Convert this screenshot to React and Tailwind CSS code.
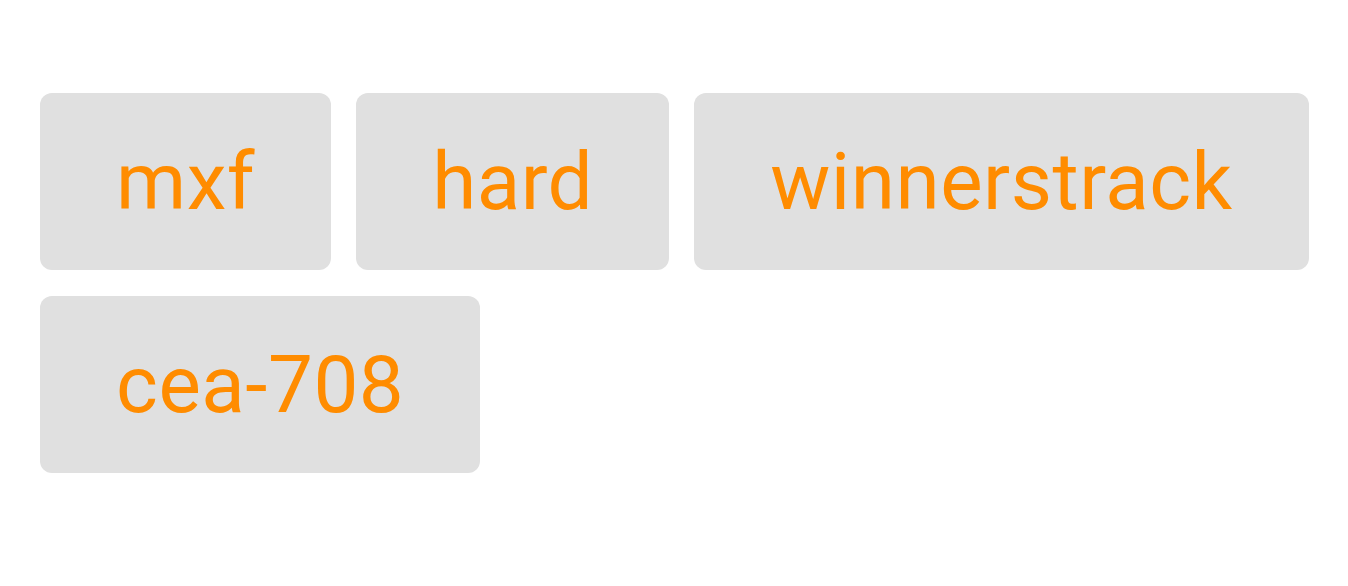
const tags = ["mxf", "hard", "winnerstrack", "cea-708"];

function App() {
  return (
    <div className="min-h-screen bg-white pl-[40px] pr-[30px] pt-[93px]" style={{ fontFamily: "Roboto, sans-serif" }}>
      <div className="flex flex-wrap gap-x-[25px] gap-y-[26px]">
        {tags.map((tag) => (
          <div
            key={tag}
            className="rounded-[12px] bg-[#e0e0e0] px-[76px] pt-[43px] pb-[41px] text-[80px] leading-[93px] tracking-[0.5px] text-[#ff8c00]"
          >
            {tag}
          </div>
        ))}
      </div>
    </div>
  );
}

export default App;
